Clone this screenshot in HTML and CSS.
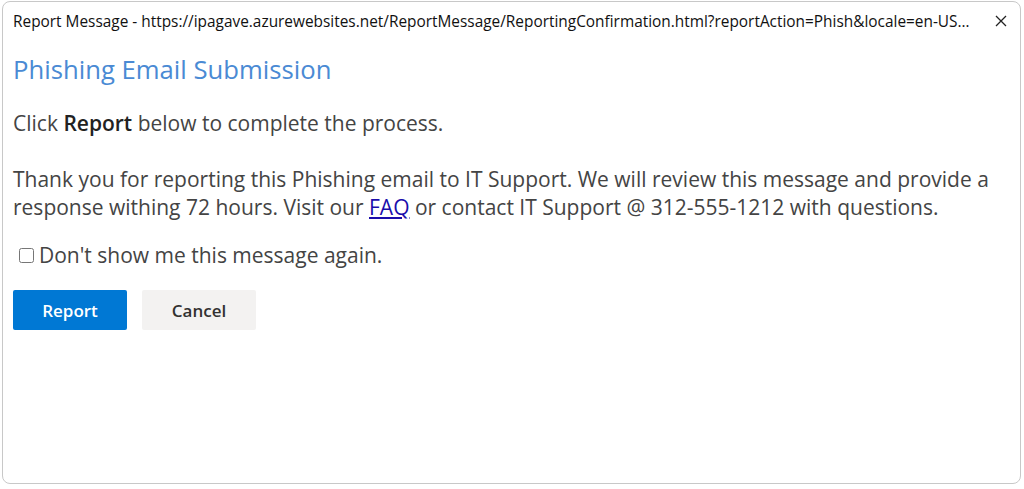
FILE: index.html
```html
<!DOCTYPE html>
<html lang="en">
<head>
    <meta charset="UTF-8">
    <meta name="viewport" content="width=device-width, initial-scale=1.0">
    <title>Report Message</title>
    <link rel="stylesheet" href="styles.css">
</head>
<body>

    <div class="dialog">
        <div class="title-bar">
            <span class="title-text">Report Message - https://ipagave.azurewebsites.net/ReportMessage/ReportingConfirmation.html?reportAction=Phish&amp;locale=en-US&amp;client=outlook</span>
            <button class="close-btn" aria-label="Close">
                <svg width="12" height="12" viewBox="0 0 12 12">
                    <path d="M1 1 L11 11 M11 1 L1 11" stroke="#222" stroke-width="1.3" fill="none"/>
                </svg>
            </button>
        </div>

        <div class="content">
            <h2>Phishing Email Submission</h2>
            <p class="intro">Click <b>Report</b> below to complete the process.</p>
            <p class="info">Thank you for reporting this Phishing email to IT Support. We will review this message and provide a response withing 72 hours. Visit our <a href="#">FAQ</a> or contact IT Support @ 312-555-1212 with questions.</p>

            <label class="dont-show">
                <input type="checkbox" id="dontShow">Don't show me this message again.
            </label>

            <div class="actions">
                <button class="btn btn-primary">Report</button>
                <button class="btn btn-default">Cancel</button>
            </div>
        </div>
    </div>

</body>
</html>
```

FILE: styles.css
```css
html, body {
    height: 100%;
}

body {
    margin: 0;
    background-color: #fff;
    font-family: "Segoe UI", "Open Sans", sans-serif;
    color: #444;
}

.dialog {
    box-sizing: border-box;
    height: calc(100% - 6px);
    margin: 1px 3px 5px 2px;
    border: 1px solid #c8c8c8;
    border-radius: 8px;
    background-color: #fff;
}

.title-bar {
    display: flex;
    align-items: center;
    height: 38px;
    padding: 0 12px 0 10px;
}

.title-text {
    flex: 1;
    font-size: 15.4px;
    color: #111;
    white-space: nowrap;
    overflow: hidden;
    text-overflow: ellipsis;
    padding-right: 24px;
}

.close-btn {
    border: none;
    background: none;
    padding: 0;
    width: 14px;
    height: 14px;
    display: flex;
    align-items: center;
    justify-content: center;
}

.content {
    padding: 0 10px;
}

h2 {
    margin: 14px 0 0 0;
    font-size: 25.7px;
    font-weight: normal;
    line-height: 32px;
    color: #4a8ad4;
}

.intro {
    margin: 23px 0 0 0;
    font-size: 21px;
    line-height: 28px;
}

.intro b {
    font-weight: 600;
    color: #222;
}

.info {
    margin: 28px 0 0 0;
    font-size: 21px;
    line-height: 28px;
}

.info a {
    color: #1a0dab;
}

.dont-show {
    display: flex;
    align-items: center;
    margin: 20px 0 0 6px;
    font-size: 21px;
    line-height: 28px;
}

.dont-show input {
    margin: 0 5px 0 0;
    width: 15px;
    height: 15px;
}

.actions {
    display: flex;
    gap: 15px;
    margin-top: 21px;
}

.btn {
    width: 114px;
    height: 40px;
    border: none;
    border-radius: 2px;
    font-family: "Segoe UI", "Open Sans", sans-serif;
    font-size: 17px;
    font-weight: 600;
}

.btn-primary {
    background-color: #0078d4;
    color: #fff;
}

.btn-default {
    background-color: #f3f2f1;
    color: #323130;
}
```
